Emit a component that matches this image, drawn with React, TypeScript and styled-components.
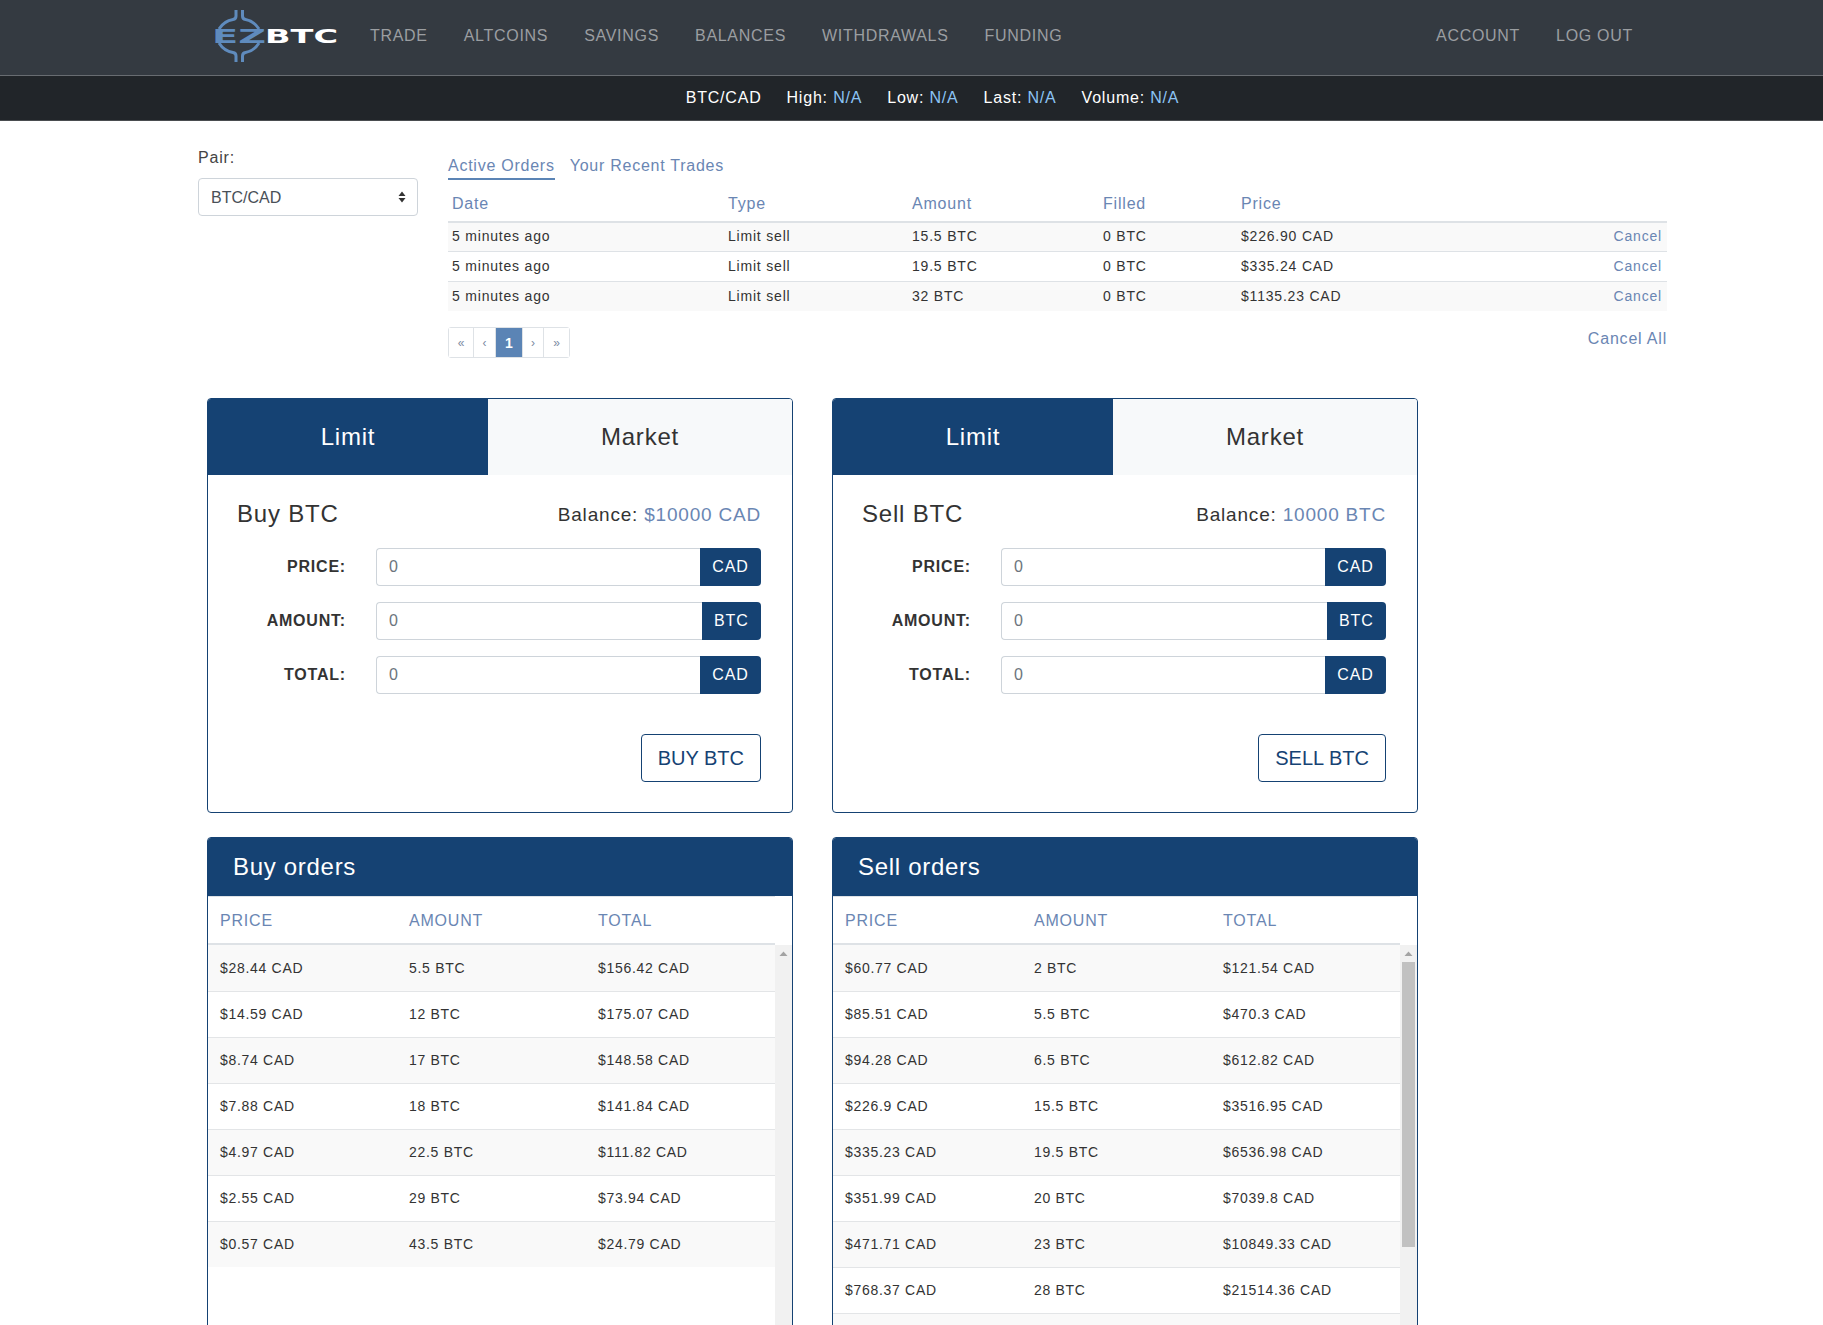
import styled, { createGlobalStyle } from "styled-components";

const navy = "#154273";
const link = "#6a86b3";

const GlobalStyle = createGlobalStyle`
  html, body {
    margin: 0;
    height: 100%;
    overflow: hidden;
    background: #fff;
  }
  body {
    font-family: "Liberation Sans", Arial, sans-serif;
    font-size: 16px;
    line-height: 24px;
    letter-spacing: 0.8px;
    color: #212529;
  }
  * {
    box-sizing: border-box;
  }
`;

const Page = styled.div`
  height: 100vh;
  overflow: hidden;
`;

const NavBar = styled.nav`
  display: flex;
  align-items: center;
  height: 76px;
  padding: 0 190px 4px 211px;
  background: #343a41;
  border-bottom: 1px solid #686c71;
`;

const NavLinks = styled.div`
  display: flex;
  gap: 36px;
  margin-left: 33px;
  letter-spacing: 0.7px;
`;

const NavAccount = styled(NavLinks)`
  margin-left: auto;
`;

const NavLink = styled.a`
  color: #9b9ea1;
`;

const TickerBar = styled.div`
  display: flex;
  justify-content: center;
  gap: 25px;
  height: 45px;
  padding-left: 42px;
  align-items: center;
  background: #212529;
  border-bottom: 1px solid #4a4d50;
  color: #fff;
`;

const TickerValue = styled.span`
  color: #8cc4f5;
`;

const TopSection = styled.section`
  display: flex;
  gap: 30px;
  padding: 25px 0 0 198px;
`;

const PairColumn = styled.div`
  width: 220px;
`;

const PairLabel = styled.label`
  display: block;
  margin-bottom: 8px;
  color: #444;
`;

const SelectWrap = styled.div`
  position: relative;
`;

const PairSelect = styled.select`
  width: 100%;
  height: 38px;
  padding: 0 12px;
  appearance: none;
  background: #fff;
  border: 1px solid #ced4da;
  border-radius: 4px;
  font-family: inherit;
  font-size: 16px;
  color: #495057;
`;

const SelectArrows = styled.svg`
  position: absolute;
  right: 12px;
  top: 13px;
  pointer-events: none;
`;

const OrdersColumn = styled.div`
  width: 1219px;
  padding-top: 8px;
`;

const TabRow = styled.div`
  display: flex;
  gap: 15px;
  letter-spacing: 0.75px;
`;

const TextTab = styled.a<{ $active?: boolean }>`
  height: 26px;
  color: ${link};
  border-bottom: 2px solid ${(p) => (p.$active ? "#5b84b5" : "transparent")};
`;

const ActiveGrid = styled.div`
  display: grid;
  grid-template-columns: 276px 184px 191px 138px 1fr;
  align-items: center;
`;

const ActiveHead = styled(ActiveGrid)`
  height: 43px;
  padding-top: 6px;
  border-bottom: 2px solid #dee2e6;
  color: ${link};
`;

const ActiveRow = styled(ActiveGrid)`
  height: 30px;
  padding-bottom: 2px;
  font-size: 14px;
  border-top: 1px solid #dee2e6;
  color: #333;

  &:nth-child(odd) {
    background: #f9f9f9;
  }
  &:first-child {
    height: 28px;
    border-top: none;
  }
`;

const Cell = styled.div`
  padding-left: 4px;
`;

const PriceCell = styled(Cell)`
  display: flex;
  justify-content: space-between;
`;

const CancelLink = styled.a`
  padding-right: 5px;
  color: ${link};
`;

const UnderTable = styled.div`
  display: flex;
  justify-content: space-between;
  margin-top: 16px;
`;

const CancelAll = styled.a`
  color: ${link};
`;

const Pager = styled.div`
  display: flex;
  height: 31px;
  border: 1px solid #dee2e6;
  border-radius: 3px;
`;

const PagerItem = styled.a<{ $active?: boolean; $width: number }>`
  display: flex;
  align-items: center;
  justify-content: center;
  width: ${(p) => p.$width}px;
  font-size: ${(p) => (p.$active ? "14px" : "12px")};
  font-weight: ${(p) => (p.$active ? "700" : "400")};
  letter-spacing: 0;
  color: ${(p) => (p.$active ? "#fff" : "#7c8ba3")};
  background: ${(p) => (p.$active ? "#5b84b5" : "#fff")};
  border-right: 1px solid #dee2e6;

  &:last-child {
    border-right: none;
  }
`;

const PanelGrid = styled.div`
  display: grid;
  grid-template-columns: 586px 586px;
  column-gap: 39px;
  row-gap: 24px;
  align-items: start;
  padding: 40px 0 0 207px;
`;

const Panel = styled.div`
  border: 1px solid ${navy};
  border-radius: 4px;
  overflow: hidden;
`;

const ModeTabs = styled.div`
  display: flex;
  height: 76px;
`;

const ModeTab = styled.div<{ $active?: boolean }>`
  display: flex;
  align-items: center;
  justify-content: center;
  flex: ${(p) => (p.$active ? "0 0 280px" : "1")};
  font-size: 24px;
  color: ${(p) => (p.$active ? "#fff" : "#333")};
  background: ${(p) => (p.$active ? navy : "#f7f9fa")};
`;

const FormBody = styled.div`
  padding: 24px 31px 30px 29px;
`;

const FormHeader = styled.div`
  display: flex;
  justify-content: space-between;
  align-items: center;
  height: 29px;
  margin-bottom: 20px;
`;

const FormTitle = styled.h3`
  margin: 0;
  font-size: 24px;
  font-weight: 400;
  color: #333;
`;

const Balance = styled.div`
  padding-top: 3px;
  font-size: 19px;
  color: #333;
`;

const BalanceValue = styled.span`
  color: ${link};
`;

const FieldRow = styled.div`
  display: flex;
  align-items: center;
  gap: 30px;
  margin-bottom: 16px;
`;

const FieldLabel = styled.label`
  width: 109px;
  text-align: right;
  font-weight: 700;
  color: #333;
`;

const InputGroup = styled.div`
  display: flex;
  flex: 1;
  height: 38px;
`;

const FieldInput = styled.input`
  flex: 1;
  min-width: 0;
  padding: 0 12px;
  border: 1px solid #ced4da;
  border-right: none;
  border-radius: 4px 0 0 4px;
  font-family: inherit;
  font-size: 16px;

  &::placeholder {
    color: #6c757d;
  }
`;

const Addon = styled.span`
  display: flex;
  align-items: center;
  padding: 0 12.5px;
  color: #fff;
  background: ${navy};
  border-radius: 0 4px 4px 0;
`;

const SubmitRow = styled.div`
  display: flex;
  justify-content: flex-end;
  margin-top: 40px;
`;

const SubmitButton = styled.button`
  height: 48px;
  padding: 0 16px;
  background: #fff;
  border: 1px solid ${navy};
  border-radius: 4px;
  font-family: inherit;
  font-size: 20px;
  color: ${navy};
`;

const OrdersHeader = styled.div`
  display: flex;
  align-items: center;
  height: 58px;
  padding-left: 25px;
  font-size: 24px;
  letter-spacing: 0.7px;
  color: #fff;
  background: ${navy};
`;

const OrdersGrid = styled.div`
  display: grid;
  grid-template-columns: repeat(3, 1fr);
  align-items: center;
`;

const OrdersHead = styled(OrdersGrid)`
  width: 567px;
  height: 49px;
  padding-top: 1px;
  border-top: 1px solid #dee2e6;
  border-bottom: 2px solid #dee2e6;
  color: ${link};
`;

const OrdersBody = styled.div`
  display: flex;
  height: 430px;
`;

const OrderRows = styled.div`
  flex: 1;
`;

const OrderRow = styled(OrdersGrid)`
  height: 46px;
  padding-bottom: 1px;
  font-size: 14px;
  letter-spacing: 0.7px;
  color: #333;
  border-top: 1px solid #e3e5e7;

  &:nth-child(odd) {
    background: #f9f9f9;
  }
  &:first-child {
    border-top: none;
  }
`;

const OrderCell = styled.div`
  padding-left: 12px;
`;

const ScrollTrack = styled.div`
  display: flex;
  flex-direction: column;
  width: 17px;
  background: #f1f1f1;
`;

const ScrollArrow = styled.svg`
  flex: none;
`;

const ScrollThumb = styled.div<{ $height: number }>`
  flex: none;
  height: ${(p) => p.$height}px;
  margin: 0 2px;
  background: #c1c1c1;
`;

const activeOrders = [
  ["$226.90 CAD", "15.5 BTC"],
  ["$335.24 CAD", "19.5 BTC"],
  ["$1135.23 CAD", "32 BTC"],
];

const buyOrders = [
  ["$28.44 CAD", "5.5 BTC", "$156.42 CAD"],
  ["$14.59 CAD", "12 BTC", "$175.07 CAD"],
  ["$8.74 CAD", "17 BTC", "$148.58 CAD"],
  ["$7.88 CAD", "18 BTC", "$141.84 CAD"],
  ["$4.97 CAD", "22.5 BTC", "$111.82 CAD"],
  ["$2.55 CAD", "29 BTC", "$73.94 CAD"],
  ["$0.57 CAD", "43.5 BTC", "$24.79 CAD"],
];

const sellOrders = [
  ["$60.77 CAD", "2 BTC", "$121.54 CAD"],
  ["$85.51 CAD", "5.5 BTC", "$470.3 CAD"],
  ["$94.28 CAD", "6.5 BTC", "$612.82 CAD"],
  ["$226.9 CAD", "15.5 BTC", "$3516.95 CAD"],
  ["$335.23 CAD", "19.5 BTC", "$6536.98 CAD"],
  ["$351.99 CAD", "20 BTC", "$7039.8 CAD"],
  ["$471.71 CAD", "23 BTC", "$10849.33 CAD"],
  ["$768.37 CAD", "28 BTC", "$21514.36 CAD"],
];

function Logo() {
  const stroke = { fill: "none", stroke: "#5f8bbd", strokeWidth: 3 };
  return (
    <svg width="126" height="54" viewBox="0 0 126 54">
      <path d="M25 1V7Q25 10 22 10.500Q13 12 8 20" {...stroke} />
      <path d="M31.500 1V7Q31.500 10 34.500 10.500Q43 12 48 20" {...stroke} />
      <path d="M25 53V47Q25 44 22 43.500Q13 42 8 34" {...stroke} />
      <path d="M31.500 53V47Q31.500 44 34.500 43.500Q43 42 48 34" {...stroke} />
      <text x="1" y="34" fontFamily="DejaVu Sans" fontWeight="700" fontSize="19" fill="#5f8bbd" textLength="54" lengthAdjust="spacingAndGlyphs" letterSpacing="0">
        EZ
      </text>
      <text x="54" y="34" fontFamily="DejaVu Sans" fontWeight="700" fontSize="19" fill="#fff" textLength="73" lengthAdjust="spacingAndGlyphs" letterSpacing="0">
        BTC
      </text>
    </svg>
  );
}

function TradeForm({ side, balance, asset }: { side: string; balance: string; asset: string }) {
  return (
    <Panel>
      <ModeTabs>
        <ModeTab $active>Limit</ModeTab>
        <ModeTab>Market</ModeTab>
      </ModeTabs>
      <FormBody>
        <FormHeader>
          <FormTitle>
            {side} {asset}
          </FormTitle>
          <Balance>
            Balance: <BalanceValue>{balance}</BalanceValue>
          </Balance>
        </FormHeader>
        <FieldRow>
          <FieldLabel>PRICE:</FieldLabel>
          <InputGroup>
            <FieldInput placeholder="0" />
            <Addon>CAD</Addon>
          </InputGroup>
        </FieldRow>
        <FieldRow>
          <FieldLabel>AMOUNT:</FieldLabel>
          <InputGroup>
            <FieldInput placeholder="0" />
            <Addon>BTC</Addon>
          </InputGroup>
        </FieldRow>
        <FieldRow>
          <FieldLabel>TOTAL:</FieldLabel>
          <InputGroup>
            <FieldInput placeholder="0" />
            <Addon>CAD</Addon>
          </InputGroup>
        </FieldRow>
        <SubmitRow>
          <SubmitButton>
            {side.toUpperCase()} {asset}
          </SubmitButton>
        </SubmitRow>
      </FormBody>
    </Panel>
  );
}

function OrderBook({ title, rows, thumb }: { title: string; rows: string[][]; thumb?: number }) {
  return (
    <Panel>
      <OrdersHeader>{title}</OrdersHeader>
      <OrdersHead>
        <OrderCell>PRICE</OrderCell>
        <OrderCell>AMOUNT</OrderCell>
        <OrderCell>TOTAL</OrderCell>
      </OrdersHead>
      <OrdersBody>
        <OrderRows>
          {rows.map((row) => (
            <OrderRow key={row[0]}>
              <OrderCell>{row[0]}</OrderCell>
              <OrderCell>{row[1]}</OrderCell>
              <OrderCell>{row[2]}</OrderCell>
            </OrderRow>
          ))}
          {/* the sell list runs on past the fold */}
          {thumb && <OrderRow />}
        </OrderRows>
        <ScrollTrack>
          <ScrollArrow width="17" height="17" viewBox="0 0 17 17">
            <path d="M4.500 11L8.500 6.500L12.500 11z" fill="#a3a3a3" />
          </ScrollArrow>
          {thumb && <ScrollThumb $height={thumb} />}
        </ScrollTrack>
      </OrdersBody>
    </Panel>
  );
}

export default function App() {
  return (
    <Page>
      <GlobalStyle />
      <NavBar>
        <Logo />
        <NavLinks>
          <NavLink>TRADE</NavLink>
          <NavLink>ALTCOINS</NavLink>
          <NavLink>SAVINGS</NavLink>
          <NavLink>BALANCES</NavLink>
          <NavLink>WITHDRAWALS</NavLink>
          <NavLink>FUNDING</NavLink>
        </NavLinks>
        <NavAccount>
          <NavLink>ACCOUNT</NavLink>
          <NavLink>LOG OUT</NavLink>
        </NavAccount>
      </NavBar>
      <TickerBar>
        <span>BTC/CAD</span>
        <span>
          High: <TickerValue>N/A</TickerValue>
        </span>
        <span>
          Low: <TickerValue>N/A</TickerValue>
        </span>
        <span>
          Last: <TickerValue>N/A</TickerValue>
        </span>
        <span>
          Volume: <TickerValue>N/A</TickerValue>
        </span>
      </TickerBar>
      <TopSection>
        <PairColumn>
          <PairLabel>Pair:</PairLabel>
          <SelectWrap>
            <PairSelect defaultValue="BTC/CAD">
              <option>BTC/CAD</option>
            </PairSelect>
            <SelectArrows width="8" height="12" viewBox="0 0 8 12">
              <path d="M4 0.500L7.500 5H0.500zM4 11.500L0.500 7H7.500z" fill="#333" />
            </SelectArrows>
          </SelectWrap>
        </PairColumn>
        <OrdersColumn>
          <TabRow>
            <TextTab $active>Active Orders</TextTab>
            <TextTab>Your Recent Trades</TextTab>
          </TabRow>
          <ActiveHead>
            <Cell>Date</Cell>
            <Cell>Type</Cell>
            <Cell>Amount</Cell>
            <Cell>Filled</Cell>
            <Cell>Price</Cell>
          </ActiveHead>
          <div>
            {activeOrders.map((order) => (
              <ActiveRow key={order[0]}>
                <Cell>5 minutes ago</Cell>
                <Cell>Limit sell</Cell>
                <Cell>{order[1]}</Cell>
                <Cell>0 BTC</Cell>
                <PriceCell>
                  <span>{order[0]}</span>
                  <CancelLink>Cancel</CancelLink>
                </PriceCell>
              </ActiveRow>
            ))}
          </div>
          <UnderTable>
            <Pager>
              <PagerItem $width={25}>«</PagerItem>
              <PagerItem $width={22}>‹</PagerItem>
              <PagerItem $active $width={27}>
                1
              </PagerItem>
              <PagerItem $width={21}>›</PagerItem>
              <PagerItem $width={25}>»</PagerItem>
            </Pager>
            <CancelAll>Cancel All</CancelAll>
          </UnderTable>
        </OrdersColumn>
      </TopSection>
      <PanelGrid>
        <TradeForm side="Buy" balance="$10000 CAD" asset="BTC" />
        <TradeForm side="Sell" balance="10000 BTC" asset="BTC" />
        <OrderBook title="Buy orders" rows={buyOrders} />
        <OrderBook title="Sell orders" rows={sellOrders} thumb={285} />
      </PanelGrid>
    </Page>
  );
}
